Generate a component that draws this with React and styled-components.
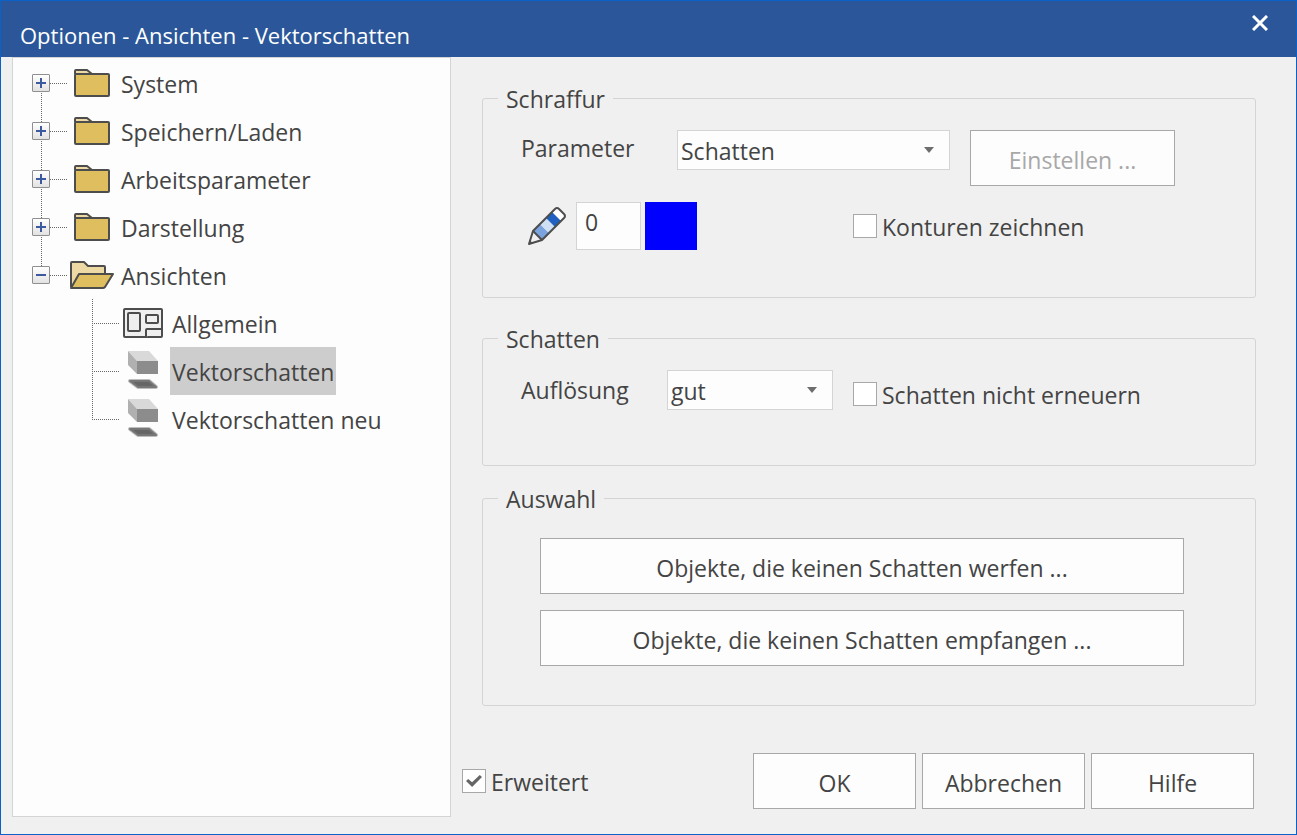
import React, { useState } from 'react';
import styled, { createGlobalStyle } from 'styled-components';

const folders = ['System', 'Speichern/Laden', 'Arbeitsparameter', 'Darstellung'];

const views = [
    { name: 'Allgemein', icon: 'layout' },
    { name: 'Vektorschatten', icon: 'shadow' },
    { name: 'Vektorschatten neu', icon: 'shadow' },
];

const FolderIcon = () => (
    <svg width="44" height="32" viewBox="0 0 44 32" fill="none" aria-hidden="true">
        <path d="M5 7V4Q5 3 6 3H17L22 7" fill="#ecd9a3" stroke="#4d4d4d" strokeWidth="2"/>
        <rect x="5" y="7" width="34" height="22" rx="1" fill="#dfbe60" stroke="#4d4d4d" strokeWidth="2"/>
    </svg>
);

const OpenFolderIcon = () => (
    <svg width="44" height="32" viewBox="0 0 44 32" fill="none" aria-hidden="true">
        <path d="M1 28V4Q1 3 2 3H14L18 7H34Q35 7 35 8V15" fill="#ecd9a3" stroke="#4d4d4d" strokeWidth="2" strokeLinejoin="round"/>
        <path d="M9 15H43L35 28Q34 29 33 29H1Z" fill="#dfbe60" stroke="#4d4d4d" strokeWidth="2" strokeLinejoin="round"/>
    </svg>
);

const LayoutIcon = () => (
    <svg width="40" height="40" viewBox="0 0 40 40" fill="#efefef" stroke="#4d4d4d" strokeWidth="2" aria-hidden="true">
        <rect x="1" y="6" width="38" height="28" rx="1"/>
        <rect x="5" y="10" width="12" height="18" rx="1"/>
        <rect x="23" y="12" width="12" height="8" rx="1"/>
        <path d="M23 34V27Q23 26 24 26H39"/>
    </svg>
);

const ShadowIcon = () => (
    <svg width="40" height="40" viewBox="0 0 40 40" aria-hidden="true">
        <path d="M5 0H26L35 10H14Z" fill="#d9d9d9"/>
        <path d="M5 0L14 10V23L5 14Z" fill="#b0b0b0"/>
        <rect x="14" y="10" width="21" height="13" fill="#8c8c8c"/>
        <path d="M7 30H26L33 36H15Z" fill="#666" stroke="#bdbdbd" strokeWidth="4" strokeLinejoin="round"/>
        <path d="M7 30H26L33 36H15Z" fill="#666" stroke="#777" strokeWidth="2" strokeLinejoin="round"/>
    </svg>
);

const PencilIcon = () => (
    <svg width="40" height="40" viewBox="0 0 40 40" aria-hidden="true">
        <path d="M6 25L28 3Q30 1 32 3L37 8Q39 10 37 12L15 34Z" fill="#fff"/>
        <path d="M6 25L13 18L22 27L15 34Z" fill="#7ba3de"/>
        <path d="M13 18L19 12L28 21L22 27Z" fill="#cfe0f5"/>
        <path d="M19 12L25 6L34 15L28 21Z" fill="#1f60c0"/>
        <path d="M6 25L28 3Q30 1 32 3L37 8Q39 10 37 12L15 34L2 38Z" fill="none" stroke="#4d4d4d" strokeWidth="2" strokeLinejoin="round"/>
        <path d="M6 25L15 34" stroke="#4d4d4d" strokeWidth="2"/>
        <path d="M2 38L2 34L6 37Z" fill="#4d4d4d"/>
    </svg>
);

const DropDown = ({ id, width, options }) => (
    <SelectBox $width={width}>
        <Select id={id}>
            {options.map(option => <option key={option}>{option}</option>)}
        </Select>
        <Arrow width="10" height="6" viewBox="0 0 10 6" aria-hidden="true">
            <path d="M0 0H10L5 6Z" fill="#6e6e6e"/>
        </Arrow>
    </SelectBox>
);

const Check = ({ children, ...rest }) => (
    <CheckLabel>
        <CheckInput type="checkbox" {...rest}/>
        <CheckText>{children}</CheckText>
    </CheckLabel>
);

const App = () => {
    const [selected, setSelected] = useState('Vektorschatten');

    return (
        <Dialog>
            <GlobalStyle/>
            <TitleBar>
                <Title>Optionen - Ansichten - Vektorschatten</Title>
                <Close type="button" aria-label="Schließen">
                    <svg width="16" height="16" viewBox="0 0 16 16" stroke="#fff" strokeWidth="3">
                        <path d="M1 1L15 15M15 1L1 15"/>
                    </svg>
                </Close>
            </TitleBar>
            <Body>
                <Sidebar>
                    <Tree>
                        {folders.map(folder => (
                            <li key={folder}>
                                <Row>
                                    <Expander type="button" aria-label={folder}>
                                        <svg width="10" height="10" viewBox="0 0 10 10" fill="#3d5a9e">
                                            <path d="M4 0H6V4H10V6H6V10H4V6H0V4H4Z"/>
                                        </svg>
                                    </Expander>
                                    <Connector $width={20}/>
                                    <FolderIcon/>
                                    <Item href="#">{folder}</Item>
                                </Row>
                            </li>
                        ))}
                        <li>
                            <Row>
                                <Expander type="button" aria-label="Ansichten">
                                    <svg width="10" height="10" viewBox="0 0 10 10" fill="#3d5a9e">
                                        <path d="M0 4H10V6H0Z"/>
                                    </svg>
                                </Expander>
                                <Connector $width={20}/>
                                <OpenFolderIcon/>
                                <Item href="#">Ansichten</Item>
                            </Row>
                            <SubTree>
                                {views.map(view => (
                                    <li key={view.name}>
                                        <Row>
                                            <Connector $width={31}/>
                                            {view.icon === 'layout' ? <LayoutIcon/> : <ShadowIcon/>}
                                            <Item
                                                href="#"
                                                $selected={view.name === selected}
                                                onClick={() => setSelected(view.name)}
                                            >
                                                {view.name}
                                            </Item>
                                        </Row>
                                    </li>
                                ))}
                            </SubTree>
                        </li>
                    </Tree>
                </Sidebar>
                <Content>
                    <Groups>
                        <Group $bottom={47}>
                            <Legend>Schraffur</Legend>
                            <Fields>
                                <FieldLabel htmlFor="parameter" $width={156}>Parameter</FieldLabel>
                                <DropDown id="parameter" width={273} options={['Schatten']}/>
                                <Button type="button" $width={205} disabled>Einstellen ...</Button>
                            </Fields>
                            <Fields $center>
                                <Pen>
                                    <PencilIcon/>
                                    <PenInput aria-label="Stift" defaultValue="0"/>
                                    <Swatch type="button" aria-label="Farbe"/>
                                </Pen>
                                <Check>Konturen zeichnen</Check>
                            </Fields>
                        </Group>
                        <Group $bottom={55}>
                            <Legend>Schatten</Legend>
                            <Fields $center>
                                <FieldLabel htmlFor="resolution" $width={146}>Auflösung</FieldLabel>
                                <DropDown id="resolution" width={166} options={['gut']}/>
                                <LowCheck>
                                    <Check>Schatten nicht erneuern</Check>
                                </LowCheck>
                            </Fields>
                        </Group>
                        <Group $bottom={39}>
                            <Legend>Auswahl</Legend>
                            <ButtonList>
                                <Button type="button">Objekte, die keinen Schatten werfen ...</Button>
                                <Button type="button">Objekte, die keinen Schatten empfangen ...</Button>
                            </ButtonList>
                        </Group>
                    </Groups>
                    <Footer>
                        <Check defaultChecked>Erweitert</Check>
                        <Actions>
                            <Button type="button" $width={163}>OK</Button>
                            <Button type="button" $width={163}>Abbrechen</Button>
                            <Button type="button" $width={163}>Hilfe</Button>
                        </Actions>
                    </Footer>
                </Content>
            </Body>
        </Dialog>
    );
};

export default App;

const GlobalStyle=createGlobalStyle`
  *{
    box-sizing:border-box;
  }

  body{
    margin:0;
    background-color:#f0f0f0;
    color:#444;
    font-family:"Open Sans", "Noto Sans", sans-serif;
    font-size:23px;
    line-height:32px;
  }

  button, input, select{
    color:inherit;
    font:inherit;
  }

  svg{
    display:block;
    flex:none;
  }
`

const Dialog=styled.div`
  min-height:100vh;
  display:flex;
  flex-direction:column;
  border:1px solid #0a62c8;
`

const TitleBar=styled.header`
  height:56px;
  display:flex;
  justify-content:space-between;
  align-items:flex-start;
  padding:0 20px 0 19px;
  background-color:#2b579a;
  color:#fff;
`

const Title=styled.h1`
  margin:0;
  padding-top:18px;
  font-size:22px;
  font-weight:normal;
`

const Close=styled.button`
  padding:14px 8px;
  border:0;
  background:none;
  cursor:pointer;
`

const Body=styled.div`
  flex:1;
  display:flex;
`

const Sidebar=styled.nav`
  flex:0 0 439px;
  margin:0 0 17px 11px;
  padding:1px 0 0 19px;
  border:1px solid #d4d4d4;
  background-color:#fdfdfd;
`

const Tree=styled.ul`
  margin:0;
  padding:0;
  list-style:none;
  background:repeating-linear-gradient(#666 0 1px, transparent 1px 2px) 9px 24px / 1px 192px no-repeat;
`

const SubTree=styled.ul`
  margin:0 0 0 60px;
  padding:0;
  list-style:none;
  background:repeating-linear-gradient(#666 0 1px, transparent 1px 2px) 0 0 / 1px 121px no-repeat;
`

const Row=styled.div`
  height:48px;
  display:flex;
  align-items:center;
`

const Expander=styled.button`
  width:18px;
  height:18px;
  display:flex;
  align-items:center;
  justify-content:center;
  padding:0;
  border:1px solid #8f8f8f;
  border-radius:1px;
  background:linear-gradient(#fff, #e2e2e2);
`

const Connector=styled.span`
  width:${props => props.$width}px;
  height:1px;
  background:repeating-linear-gradient(90deg, #666 0 1px, transparent 1px 2px) 0 0 / calc(100% - 3px) 1px no-repeat;
`

const Item=styled.a`
  margin-left:${props => props.$selected === undefined ? 5 : 7}px;
  padding:2px 2px 0;
  color:inherit;
  line-height:46px;
  text-decoration:none;
  white-space:nowrap;
  background-color:${props => props.$selected ? '#cdcdcd' : 'transparent'};
`

const Content=styled.main`
  flex:1;
  display:flex;
  flex-direction:column;
  justify-content:space-between;
  padding:25px 40px 25px 11px;
`

const Groups=styled.div`
  padding-left:20px;
`

const Group=styled.fieldset`
  min-width:0;
  margin:0;
  padding:16px 38px ${props => props.$bottom}px;
  border:1px solid #d4d4d4;
  border-radius:3px;

  & + &{
    margin-top:24px;
  }

  & + & + &{
    margin-top:16px;
  }
`

const Legend=styled.legend`
  margin-left:-23px;
  padding:2px 8px 0;
  line-height:30px;
`

const Fields=styled.div`
  display:flex;
  align-items:${props => props.$center ? 'center' : 'flex-start'};

  & + &{
    margin-top:16px;
  }
`

const FieldLabel=styled.label`
  width:${props => props.$width}px;
  line-height:36px;
`

const SelectBox=styled.div`
  position:relative;
  width:${props => props.$width}px;
  margin-right:20px;
`

const Select=styled.select`
  display:block;
  width:100%;
  height:40px;
  padding:2px 28px 0 3px;
  appearance:none;
  border:1px solid #d4d4d4;
  border-radius:0;
  background-color:#fdfdfd;
`

const Arrow=styled.svg`
  position:absolute;
  top:17px;
  right:16px;
  pointer-events:none;
`

const Button=styled.button`
  width:${props => props.$width ? props.$width + 'px' : '100%'};
  height:56px;
  padding:4px 8px 0;
  border:1px solid #a8a8a8;
  background-color:#fdfdfd;

  &:disabled{
    color:#a8a8a8;
  }
`

const Pen=styled.div`
  width:332px;
  display:flex;
  align-items:center;
  padding-left:6px;
`

const PenInput=styled.input`
  width:65px;
  height:48px;
  margin:0 4px 0 9px;
  padding:0 8px 8px;
  border:1px solid #d4d4d4;
  background-color:#fdfdfd;
`

const Swatch=styled.button`
  width:52px;
  height:48px;
  border:0;
  background-color:#00f;
`

const CheckLabel=styled.label`
  display:flex;
  align-items:center;
  gap:5px;
  white-space:nowrap;
`

const CheckText=styled.span`
  padding-top:2px;
  line-height:30px;
`

const CheckInput=styled.input`
  width:24px;
  height:24px;
  display:grid;
  place-content:center;
  margin:0;
  appearance:none;
  border:1px solid #a8a8a8;
  background-color:#fff;

  &:checked:before{
    content:"";
    width:16px;
    height:12px;
    background-color:#666;
    clip-path:polygon(0 50%, 14% 33%, 38% 60%, 86% 0, 100% 17%, 38% 100%);
  }
`

const LowCheck=styled.div`
  align-self:flex-end;
`

const ButtonList=styled.div`
  display:grid;
  gap:16px;
  padding:8px 33px 0 19px;
`

const Footer=styled.footer`
  display:flex;
  justify-content:space-between;
  align-items:center;
  margin-top:24px;
  padding-right:2px;
`

const Actions=styled.div`
  display:flex;
  gap:6px;
`
